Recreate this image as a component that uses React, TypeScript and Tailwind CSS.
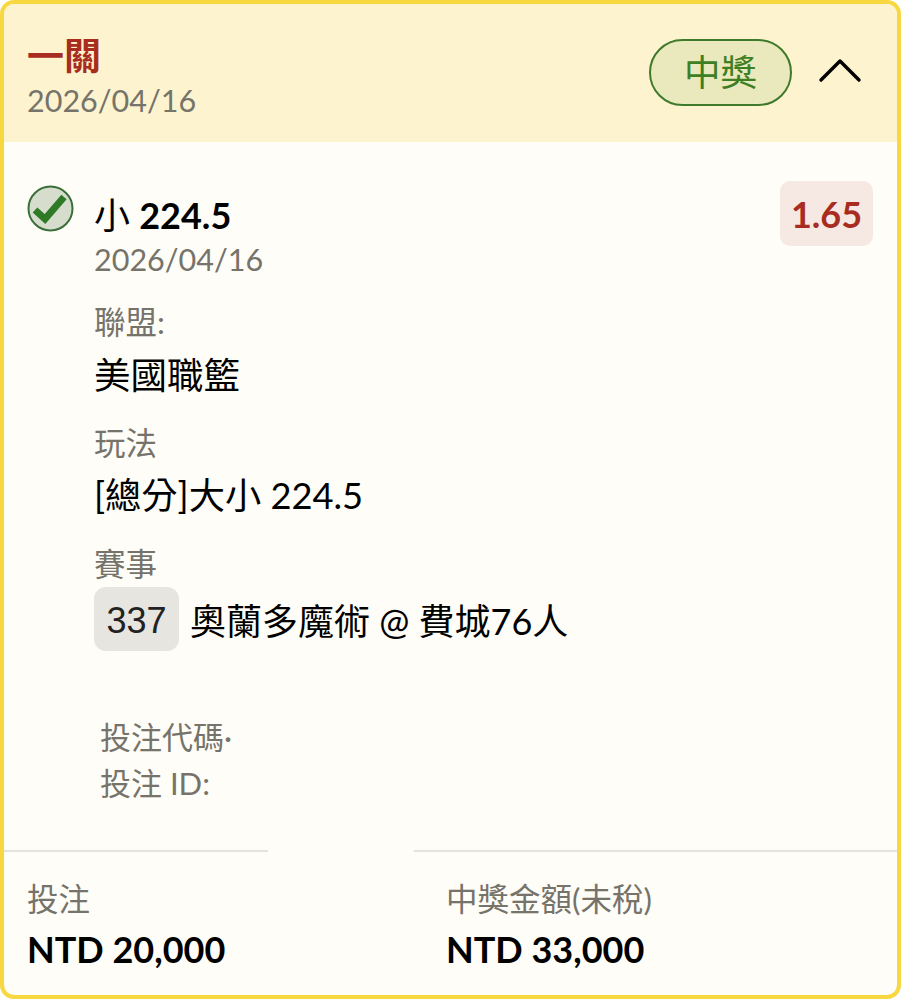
import React from 'react';

const font = { fontFamily: 'Lato, "Noto Sans CJK TC", sans-serif' };

export default function App() {
  return (
    <div className="w-[907px] h-[1000px] bg-white" style={font}>
      <div className="relative w-[901px] h-[999px] flex flex-col border-4 border-[#f8d840] rounded-[14px] bg-[#fffdf7] overflow-hidden">
        {/* Header */}
        <div className="h-[138px] shrink-0 bg-[#fdf3cf] flex justify-between pl-[23px] pr-[35px]">
          <div className="pt-[30px]">
            <div className="text-[37px] leading-[44px] font-bold text-[#a82c20]">一關</div>
            <div className="text-[30.5px] leading-[36px] mt-[4px] text-[#75736a]">2026/04/16</div>
          </div>
          <div className="flex items-center gap-[26px] pb-[1px]">
            <div className="w-[143px] h-[67px] rounded-full border-2 border-[#3f7a2c] bg-[#e9e9bd] flex items-center justify-center text-[36.5px] text-[#3f7f24]">中獎</div>
            <svg width="44" height="26" viewBox="0 0 44 26" className="-mt-[6px]">
              <path d="M3 23 L22 4 L41 23" fill="none" stroke="#000" strokeWidth="3.4" strokeLinecap="round" strokeLinejoin="round" />
            </svg>
          </div>
        </div>

        {/* Bet */}
        <div className="flex-1 flex flex-col pl-[23px] pr-[24px] pt-[43px]">
          <div className="flex items-start">
            <div className="w-[67px] shrink-0">
              <svg width="47" height="47" viewBox="0 0 47 47">
                <circle cx="23.5" cy="23.5" r="22" fill="#d7ddcc" stroke="#3a6e3a" strokeWidth="2" />
                <path d="M8 25 L18 34 L37 12" fill="none" stroke="#2f7a26" strokeWidth="7" />
              </svg>
            </div>
            <div className="flex-1">
              <div className="text-[36px] leading-[46px] mt-[7px] text-black">小 <span className="font-bold">224.5</span></div>
              <div className="text-[30.5px] leading-[36px] mt-[3px] text-[#75736a]">2026/04/16</div>
            </div>
            <div className="w-[93px] h-[65px] -mt-[4px] rounded-[10px] bg-[#f6e8e2] flex items-center justify-center text-[36px] font-bold text-[#a82c20]">1.65</div>
          </div>

          <div className="pl-[67px]">
            <div className="text-[31.5px] leading-[40px] mt-[25px] text-[#75736a]">聯盟:</div>
            <div className="text-[36.5px] leading-[46px] mt-[10px] text-black">美國職籃</div>
            <div className="text-[31.5px] leading-[40px] mt-[25px] text-[#75736a]">玩法</div>
            <div className="text-[36.25px] leading-[46px] mt-[9px] text-black">[總分]大小 224.5</div>
            <div className="text-[31.5px] leading-[40px] mt-[26px] text-[#75736a]">賽事</div>
            <div className="flex items-center mt-[3px] text-[36px] leading-[46px] text-black">
              <span className="w-[85px] h-[64px] pt-[3px] rounded-[12px] bg-[#e7e5e0] flex items-center justify-center text-[#222]" style={{ fontFamily: '"Liberation Sans", sans-serif' }}>337</span>
              <span className="ml-[11px] pt-[3px]">奧蘭多魔術 @ 費城76人</span>
            </div>
            <div className="pl-[6px] mt-[63px] text-[31px] leading-[46px] text-[#75736a]">
              <div>投注代碼·</div>
              <div>投注 ID:</div>
            </div>
          </div>
        </div>

        {/* Footer */}
        <div className="h-[145px] shrink-0 border-t-2 border-[#e5e3dc] flex pl-[23px] pt-[25px]">
          <div className="w-[419px]">
            <div className="text-[31.5px] leading-[44px] text-[#75736a]">投注</div>
            <div className="text-[36px] leading-[48px] mt-[4px] font-bold text-black">NTD 20,000</div>
          </div>
          <div>
            <div className="text-[31.5px] leading-[44px] text-[#75736a]">中獎金額(未稅)</div>
            <div className="text-[36px] leading-[48px] mt-[4px] font-bold text-black">NTD 33,000</div>
          </div>
        </div>

        {/* gap in the divider */}
        <div className="absolute left-[264px] bottom-[143px] w-[146px] h-[3px] rounded-full bg-[#fffdf7]" />
      </div>
    </div>
  );
}
